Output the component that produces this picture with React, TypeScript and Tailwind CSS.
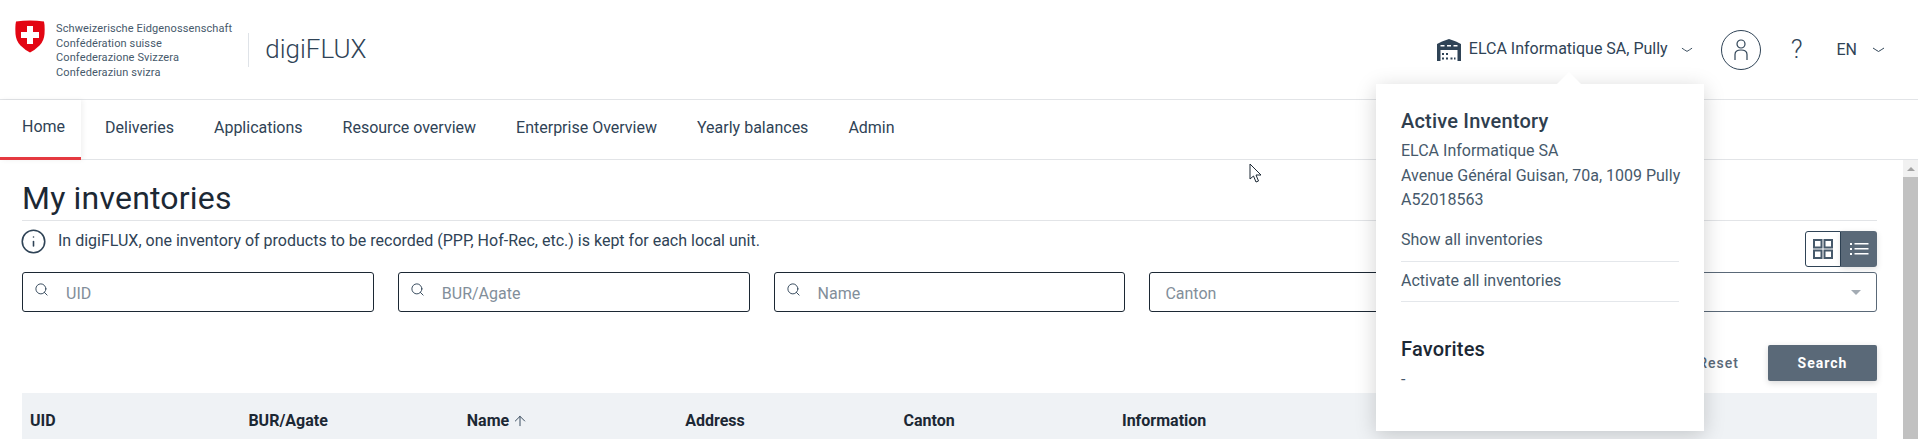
import { ArrowUp, Info, Search } from 'lucide-react';

const navItems = ['Deliveries', 'Applications', 'Resource overview', 'Enterprise Overview', 'Yearly balances', 'Admin'];
const searchFields = ['UID', 'BUR/Agate', 'Name'];
const columns = ['UID', 'BUR/Agate', 'Name', 'Address', 'Canton', 'Information'];
const crestLines = ['Schweizerische Eidgenossenschaft', 'Confédération suisse', 'Confederazione Svizzera', 'Confederaziun svizra'];

function Chevron({ className }: { className: string }) {
  return (
    <svg className={className} viewBox="0 0 13 6" fill="none" stroke="#2f4356" strokeWidth="1">
      <path d="M1 1 Q4 3 6.5 4.5 Q9 3 12 1" />
    </svg>
  );
}

function Shield() {
  return (
    <svg className="w-[30px] h-[33px] shrink-0" viewBox="0 0 30 33">
      <path d="M1 1.5 Q15 -0.5 29 1.5 Q30 6 29.5 14 Q29 21 24.5 25.5 Q20 30 15 32.5 Q10 30 5.5 25.5 Q1 21 .5 14 Q0 6 1 1.5Z" fill="#e30613" />
      <path d="M12 6h6v6h6v6h-6v6h-6v-6H6v-6h6z" fill="#fff" />
    </svg>
  );
}

function Warehouse() {
  return (
    <svg className="w-6 h-[22px] shrink-0" viewBox="0 0 24 22" fill="#2f4356">
      <path d="M12 0 19 2.500 24 5v17h-3.500V11h-17v11H0V5l5-2.500z" />
      <path d="M3.500 6h4v1.500h-4zM10 6h4v1.500h-4zM16.500 6h4v1.500h-4z" fill="#fff" />
      <path d="M5 14h2v2H5zM9 14h2v2H9zM5 18.500h2v2H5zM9 18.500h2v2H9zM13.500 18.500h2v2h-2zM17 18.500h1.500v2H17z" />
    </svg>
  );
}

function UserAvatar() {
  return (
    <div className="w-10 h-10 rounded-full border border-[#2f4356] flex items-center justify-center">
      <svg className="w-[16px] h-[22px]" viewBox="0 0 16 22" fill="none" stroke="#2f4356" strokeWidth="1.2">
        <circle cx="8" cy="5" r="4" />
        <path d="M2 21v-5.500C2 12.500 4.500 11 8 11s6 1.500 6 4.500V21" />
      </svg>
    </div>
  );
}

function GridIcon() {
  return (
    <svg className="w-5 h-5" viewBox="0 0 20 20" fill="none" stroke="#46596b" strokeWidth="2">
      <rect x="1" y="1" width="7.500" height="7.500" />
      <rect x="11.500" y="1" width="7.500" height="7.500" />
      <rect x="1" y="11.500" width="7.500" height="7.500" />
      <rect x="11.500" y="11.500" width="7.500" height="7.500" />
    </svg>
  );
}

function ListIcon() {
  return (
    <svg className="w-5 h-4" viewBox="0 0 20 16" fill="#fff">
      <path d="M1 2h2v2H1zM1 7h2v2H1zM1 12h2v2H1z" />
      <path d="M5.500 2h14v1.500h-14zM5.500 7h14v1.500h-14zM5.500 12h14v1.500h-14z" />
    </svg>
  );
}

function Cursor() {
  return (
    <svg className="absolute left-[1249px] top-[163px] w-[14px] h-[21px]" viewBox="0 0 14 21" fill="#fff" stroke="#1c2834" strokeWidth="1">
      <path d="M1 1v15l3.500-3 2.500 6 2.500-1-2.500-6H12z" />
    </svg>
  );
}

function InventoryPopover() {
  return (
    <div className="absolute left-[1376px] top-[84px] w-[328px] h-[347px] bg-white shadow-[0_4px_20px_rgba(0,0,0,0.18)] px-[25px] pt-[24px] text-[#46596b] z-10">
      <div className="absolute -top-[12px] left-[181px] w-0 h-0 border-x-[12px] border-x-transparent border-b-[12px] border-b-white" />
      <h3 className="text-[20px] leading-[26px] font-medium text-[#2f3e4e] tracking-[0.2px]">Active Inventory</h3>
      <div className="mt-[5px] text-[16px] leading-[24.500px] whitespace-nowrap">
        <div>ELCA Informatique SA</div>
        <div>Avenue Général Guisan, 70a, 1009 Pully</div>
        <div>A52018563</div>
      </div>
      <div className="mt-[8px] text-[16px] h-[41px] leading-[38px] border-b border-[#e4e7eb]">Show all inventories</div>
      <div className="text-[16px] h-[40px] leading-[37px] border-b border-[#e4e7eb]">Activate all inventories</div>
      <h3 className="mt-[34px] text-[20px] leading-[26px] font-medium text-[#1c2834] tracking-[0.2px]">Favorites</h3>
      <div className="mt-[6px] text-[16px] leading-6">-</div>
    </div>
  );
}

export default function App() {
  return (
    <div className="relative h-[439px] overflow-hidden flex flex-col bg-white font-[Roboto,sans-serif] text-[#1c2834]">
      {/* Top bar */}
      <header className="h-[100px] shrink-0 border-b border-[#e2e4e7] flex items-center justify-between">
        <div className="flex items-center pl-[15px]">
          <div className="self-start pt-[1px]"><Shield /></div>
          <div className="ml-[11px] pt-[3px] text-[11px] leading-[14.500px] tracking-[0.12px] text-[#46596b] whitespace-nowrap">
            {crestLines.map((line) => (
              <div key={line}>{line}</div>
            ))}
          </div>
          <div className="ml-[16px] w-px h-[34px] bg-[#dfe3e8]" />
          <div className="ml-[16px] text-[26px] font-light text-[#2f4356]">digiFLUX</div>
        </div>
        <div className="flex items-center pr-[33px]">
          <Warehouse />
          <span className="ml-[8px] -mt-[1px] text-[16px] text-[#2f4356] whitespace-nowrap">ELCA Informatique SA, Pully</span>
          <Chevron className="ml-[13px] w-[12px] h-[6px]" />
          <div className="ml-[28px]"><UserAvatar /></div>
          <span className="ml-[30px] text-[26px] font-light text-[#2f4356]">?</span>
          <span className="ml-[34px] text-[16px] text-[#2f4356]">EN</span>
          <Chevron className="ml-[15px] w-[13px] h-[6px]" />
        </div>
      </header>

      {/* Main navigation */}
      <nav className="h-[60px] shrink-0 border-b border-[#e2e4e7] flex text-[16px] text-[#2f4356]">
        <a className="w-[81px] h-[60px] pl-[22px] pb-[3px] flex items-center border-b-[3px] border-[#e53940] shadow-[2px_0_5px_rgba(0,0,0,0.06)]">Home</a>
        <div className="flex items-center gap-10 ml-[24px] h-[54px] mt-[1px]">
          {navItems.map((item) => (
            <a key={item} className="whitespace-nowrap">{item}</a>
          ))}
        </div>
      </nav>

      <div className="flex-1 flex min-h-0">
        <main className="flex-1 min-w-0 pl-[22px] pr-[26px]">
          <h1 className="h-[61px] border-b border-[#e2e4e7] text-[32px] leading-[76px] tracking-[0.2px]">My inventories</h1>

          <div className="h-[46px] pt-[10px] flex justify-between">
            <div className="flex items-start text-[16px] text-[#2f4356]">
              <Info className="w-[27px] h-[27px] -mt-[3px] -ml-[2px] mr-[11px]" strokeWidth={1.400} />
              <span className="-mt-[2px]">In digiFLUX, one inventory of products to be recorded (PPP, Hof-Rec, etc.) is kept for each local unit.</span>
            </div>
            <div className="flex h-9">
              <button className="w-9 border border-[#2f4356] rounded-l-[3px] flex items-center justify-center"><GridIcon /></button>
              <button className="w-9 bg-[#5a6978] rounded-r-[3px] flex items-center justify-center shadow-[0_2px_6px_rgba(0,0,0,0.12)]"><ListIcon /></button>
            </div>
          </div>

          <div className="mt-[5px] grid grid-cols-5 gap-6">
            {searchFields.map((field) => (
              <div key={field} className="h-[40px] border border-[#1c2834] rounded-[3px] flex items-center text-[16px] text-[#828e9a]">
                <Search className="ml-[11px] w-[15px] h-[15px] text-[#2f4356] -mt-[5px]" strokeWidth={1.500} />
                <span className="ml-[17px] mt-[3px]">{field}</span>
              </div>
            ))}
            <div className="h-[40px] border border-[#1c2834] rounded-[3px] flex items-center pl-[15px] pt-[4px] text-[16px] text-[#828e9a]">Canton</div>
            <div className="h-[40px] border border-[#5a6978] rounded-[3px] flex items-center justify-end pr-[15px]">
              <div className="w-0 h-0 border-x-[5px] border-x-transparent border-t-[5px] border-t-[#a3abb3]" />
            </div>
          </div>

          <div className="mt-[33px] flex justify-end items-center gap-[29px]">
            <button className="text-[14px] font-medium tracking-[1px] text-[#5a6978]">Reset</button>
            <button className="w-[109px] h-[36px] bg-[#5a6978] rounded-[2px] text-white text-[14px] font-bold tracking-[1px] shadow-[0_2px_6px_rgba(0,0,0,0.15)]">Search</button>
          </div>

          <div className="mt-[12px] h-[60px] bg-[#eff2f5] grid grid-cols-[repeat(8,218.400px)] pl-2 pt-[16px] text-[16px] leading-6 font-bold overflow-hidden">
            {columns.map((col) => (
              <div key={col} className="flex items-center whitespace-nowrap h-6">
                {col}
                {col === 'Name' && <ArrowUp className="ml-[3px] w-[16px] h-[16px] text-[#2f4356]" strokeWidth={1.400} />}
              </div>
            ))}
          </div>
        </main>

        {/* Page scrollbar */}
        <div className="w-[15px] shrink-0 bg-[#f1f1f1] flex flex-col">
          <div className="h-[17px] flex items-center justify-center">
            <div className="w-0 h-0 border-x-[4px] border-x-transparent border-b-[4px] border-b-[#a3a3a3]" />
          </div>
          <div className="flex-1 bg-[#c1c1c1]" />
        </div>
      </div>

      <InventoryPopover />
      <Cursor />
    </div>
  );
}
